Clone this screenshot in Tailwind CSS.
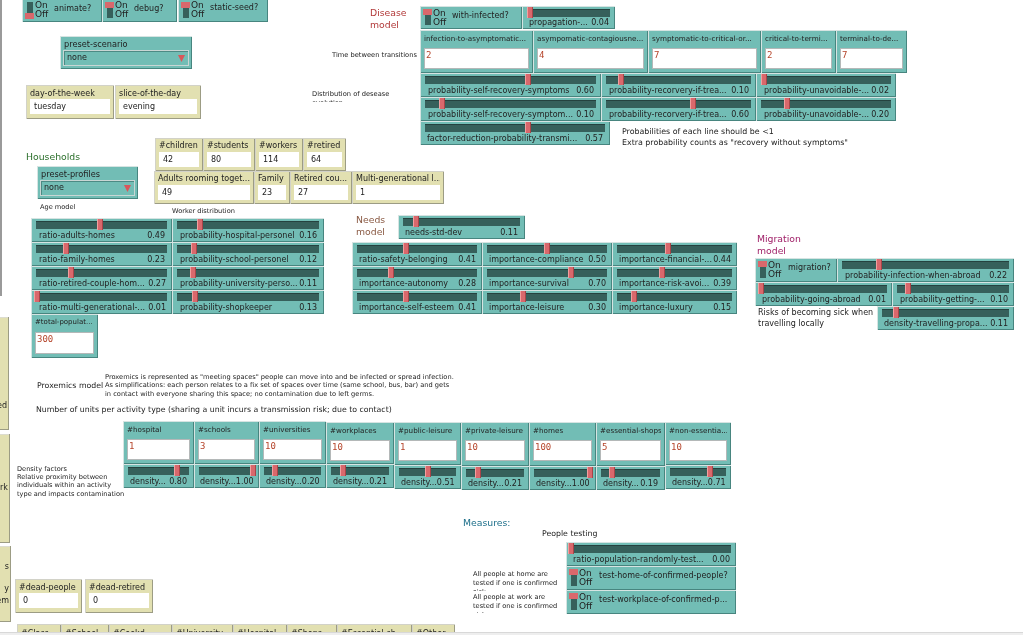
<!doctype html>
<html><head><meta charset="utf-8"><script src="https://cdn.jsdelivr.net/npm/@tailwindcss/browser@4"></script></head>
<body class="bg-white">
<div class="relative w-[1023px] h-[635px] overflow-hidden bg-white text-[#222] text-[8px] blur-[0.3px] font-['DejaVu_Sans',sans-serif]">

<!-- left edge + clipped panels -->
<div class="absolute left-0 top-0 w-[2px] h-[296px] bg-[#9a9a9a]"></div>
<div class="absolute left-0 top-[317px] w-[9px] h-[113px] bg-[#e2e0b1] shadow-[inset_-1px_-1px_0_#9c9c84,inset_0_1px_0_#dcdcd0] overflow-hidden"><span class="absolute right-[2px] top-[83px]">ed</span></div>
<div class="absolute left-0 top-[434px] w-[10px] h-[109px] bg-[#e2e0b1] shadow-[inset_-1px_-1px_0_#9c9c84,inset_0_1px_0_#dcdcd0] overflow-hidden"><span class="absolute right-[2px] top-[48px]">rk</span></div>
<div class="absolute left-0 top-[546px] w-[11px] h-[76px] bg-[#e2e0b1] shadow-[inset_-1px_-1px_0_#9c9c84,inset_0_1px_0_#dcdcd0] overflow-hidden"><span class="absolute right-[2px] top-[15px]">s</span><span class="absolute right-[2px] top-[37px]">y</span><span class="absolute right-[2px] top-[49px]">em</span></div>

<!-- top switches -->
<div class="absolute left-[22px] top-0 flex">
 <div class="relative w-[80px] h-[22px] bg-[#72bdb5] shadow-[inset_1px_0_0_#d6e4e2,inset_-1px_-1px_0_#47857f]"><i class="absolute left-[5px] top-[2px] w-[6px] h-[16px] bg-[#36605b]"></i><i class="absolute left-[3px] top-[13px] w-[9px] h-[6px] bg-[#d9686c]"></i><span class="absolute left-[13px] top-[1px] text-[9px] leading-[9px]">On<br>Off</span><span class="absolute left-[32px] top-[3px]">animate?</span></div>
 <div class="relative w-[75px] h-[22px] bg-[#72bdb5] shadow-[inset_1px_0_0_#d6e4e2,inset_-1px_-1px_0_#47857f]"><i class="absolute left-[5px] top-[2px] w-[6px] h-[16px] bg-[#36605b]"></i><i class="absolute left-[3px] top-[2px] w-[9px] h-[6px] bg-[#d9686c]"></i><span class="absolute left-[13px] top-[1px] text-[9px] leading-[9px]">On<br>Off</span><span class="absolute left-[32px] top-[3px]">debug?</span></div>
 <div class="relative ml-[1px] w-[90px] h-[22px] bg-[#72bdb5] shadow-[inset_1px_0_0_#d6e4e2,inset_-1px_-1px_0_#47857f]"><i class="absolute left-[5px] top-[2px] w-[6px] h-[16px] bg-[#36605b]"></i><i class="absolute left-[3px] top-[2px] w-[9px] h-[6px] bg-[#d9686c]"></i><span class="absolute left-[13px] top-[1px] text-[9px] leading-[9px]">On<br>Off</span><span class="absolute left-[32px] top-[2px]">static-seed?</span></div>
</div>

<!-- preset-scenario -->
<div class="absolute left-[60px] top-[36px] w-[132px] h-[33px] bg-[#72bdb5] shadow-[inset_1px_1px_0_#d6e4e2,inset_-1px_-1px_0_#47857f] px-[3px] pt-[3px]">
 <div class="px-[1px] leading-[10px] text-[8.2px]">preset-scenario</div>
 <div class="mt-[1px] h-[16px] border border-[#c8d6d4] shadow-[inset_1px_1px_0_#4c8a84] flex items-center justify-between pl-[3px] pr-[3px]"><span>none</span><svg width="7" height="7" viewBox="0 0 7 7"><path d="M0 0H7L3.5 7Z" fill="#d9565a"/></svg></div>
</div>

<!-- day / slice -->
<div class="absolute left-[26px] top-[85px] flex gap-[1px]">
 <div class="w-[88px] h-[34px] bg-[#e2e0b1] shadow-[inset_1px_1px_0_#d2d2c8,inset_-1px_-1px_0_#9c9c84] px-[4px] pt-[4px]"><div class="leading-[10px] whitespace-nowrap">day-of-the-week</div><div class="h-[15px] bg-white px-[4px] leading-[15px]">tuesday</div></div>
 <div class="w-[86px] h-[34px] bg-[#e2e0b1] shadow-[inset_1px_1px_0_#d2d2c8,inset_-1px_-1px_0_#9c9c84] px-[4px] pt-[4px]"><div class="leading-[10px] whitespace-nowrap">slice-of-the-day</div><div class="h-[15px] bg-white px-[4px] leading-[15px]">evening</div></div>
</div>

<!-- disease model -->
<div class="absolute left-[370px] top-[7px] text-[9.3px] leading-[12px] text-[#b23a3a]">Disease<br>model</div>
<div class="absolute left-[332px] top-[51px] text-[6.7px] leading-[9px] whitespace-nowrap">Time between transitions</div>
<div class="absolute left-[312px] top-[90px] h-[12px] overflow-hidden text-[6.7px] leading-[9px] w-[100px]">Distribution of desease<br>evolution</div>
<div class="absolute left-[420px] top-[6px] flex flex-col">
 <div class="flex mb-[1px]">
  <div class="relative w-[102px] h-[23px] bg-[#72bdb5] shadow-[inset_1px_1px_0_#d6e4e2,inset_-1px_-1px_0_#47857f]"><i class="absolute left-[5px] top-[3px] w-[6px] h-[16px] bg-[#36605b]"></i><i class="absolute left-[3px] top-[3px] w-[9px] h-[6px] bg-[#d9686c]"></i><span class="absolute left-[13px] top-[3px] text-[9px] leading-[9px]">On<br>Off</span><span class="absolute left-[32px] top-[4px]">with-infected?</span></div>
  <div class="w-[93px] h-[23px] bg-[#72bdb5] shadow-[inset_1px_1px_0_#d6e4e2,inset_-1px_-1px_0_#47857f] px-[5px] pt-[3px]"><div class="relative h-[8px] bg-[#36605b] shadow-[inset_0_1px_0_#25423f]"><i class="absolute left-[calc(4%-3px)] top-[-2px] w-[6px] h-[11px] bg-[#d9686c] shadow-[inset_1px_0_0_#f0a0a0,inset_-1px_0_0_#a84448]"></i></div><div class="flex justify-between pl-[2px] pr-[1px] leading-[12px] whitespace-nowrap"><span>propagation-...</span><span>0.04</span></div></div>
 </div>
 <div class="flex">
  <div class="w-[113px] h-[43px] bg-[#72bdb5] shadow-[inset_1px_1px_0_#d6e4e2,inset_-1px_-1px_0_#47857f] px-[4px] pt-[3px]"><div class="leading-[11px] h-[15px] whitespace-nowrap overflow-hidden text-[7.2px]">infection-to-asymptomatic...</div><div class="h-[21px] bg-white border-[1.5px] border-[#b4b8b8] px-[1px] text-[#b5442a] font-['DejaVu_Sans_Mono',monospace] text-[9px] leading-[12px]">2</div></div>
  <div class="w-[115px] h-[43px] bg-[#72bdb5] shadow-[inset_1px_1px_0_#d6e4e2,inset_-1px_-1px_0_#47857f] px-[4px] pt-[3px]"><div class="leading-[11px] h-[15px] whitespace-nowrap overflow-hidden text-[7.2px]">asympomatic-contagiousne...</div><div class="h-[21px] bg-white border-[1.5px] border-[#b4b8b8] px-[1px] text-[#b5442a] font-['DejaVu_Sans_Mono',monospace] text-[9px] leading-[12px]">4</div></div>
  <div class="w-[113px] h-[43px] bg-[#72bdb5] shadow-[inset_1px_1px_0_#d6e4e2,inset_-1px_-1px_0_#47857f] px-[4px] pt-[3px]"><div class="leading-[11px] h-[15px] whitespace-nowrap overflow-hidden text-[7.2px]">symptomatic-to-critical-or...</div><div class="h-[21px] bg-white border-[1.5px] border-[#b4b8b8] px-[1px] text-[#b5442a] font-['DejaVu_Sans_Mono',monospace] text-[9px] leading-[12px]">7</div></div>
  <div class="w-[75px] h-[43px] bg-[#72bdb5] shadow-[inset_1px_1px_0_#d6e4e2,inset_-1px_-1px_0_#47857f] px-[4px] pt-[3px]"><div class="leading-[11px] h-[15px] whitespace-nowrap overflow-hidden text-[7.2px]">critical-to-termi...</div><div class="h-[21px] bg-white border-[1.5px] border-[#b4b8b8] px-[1px] text-[#b5442a] font-['DejaVu_Sans_Mono',monospace] text-[9px] leading-[12px]">2</div></div>
  <div class="w-[71px] h-[43px] bg-[#72bdb5] shadow-[inset_1px_1px_0_#d6e4e2,inset_-1px_-1px_0_#47857f] px-[4px] pt-[3px]"><div class="leading-[11px] h-[15px] whitespace-nowrap overflow-hidden text-[7.2px]">terminal-to-de...</div><div class="h-[21px] bg-white border-[1.5px] border-[#b4b8b8] px-[1px] text-[#b5442a] font-['DejaVu_Sans_Mono',monospace] text-[9px] leading-[12px]">7</div></div>
 </div>
 <div class="flex">
  <div class="w-[181px] h-[24px] bg-[#72bdb5] shadow-[inset_1px_1px_0_#d6e4e2,inset_-1px_-1px_0_#47857f] px-[5px] pt-[3px]"><div class="relative h-[8px] bg-[#36605b] shadow-[inset_0_1px_0_#25423f]"><i class="absolute left-[calc(60%-3px)] top-[-2px] w-[6px] h-[11px] bg-[#d9686c] shadow-[inset_1px_0_0_#f0a0a0,inset_-1px_0_0_#a84448]"></i></div><div class="flex justify-between pl-[3px] pr-[2px] pt-[1px] leading-[12px] whitespace-nowrap"><span>probability-self-recovery-symptoms</span><span>0.60</span></div></div>
  <div class="w-[155px] h-[24px] bg-[#72bdb5] shadow-[inset_1px_1px_0_#d6e4e2,inset_-1px_-1px_0_#47857f] px-[5px] pt-[3px]"><div class="relative h-[8px] bg-[#36605b] shadow-[inset_0_1px_0_#25423f]"><i class="absolute left-[calc(10%-3px)] top-[-2px] w-[6px] h-[11px] bg-[#d9686c] shadow-[inset_1px_0_0_#f0a0a0,inset_-1px_0_0_#a84448]"></i></div><div class="flex justify-between pl-[3px] pr-[2px] pt-[1px] leading-[12px] whitespace-nowrap"><span>probability-recorvery-if-trea...</span><span>0.10</span></div></div>
  <div class="w-[140px] h-[24px] bg-[#72bdb5] shadow-[inset_1px_1px_0_#d6e4e2,inset_-1px_-1px_0_#47857f] px-[5px] pt-[3px]"><div class="relative h-[8px] bg-[#36605b] shadow-[inset_0_1px_0_#25423f]"><i class="absolute left-[calc(2%-3px)] top-[-2px] w-[6px] h-[11px] bg-[#d9686c] shadow-[inset_1px_0_0_#f0a0a0,inset_-1px_0_0_#a84448]"></i></div><div class="flex justify-between pl-[3px] pr-[2px] pt-[1px] leading-[12px] whitespace-nowrap"><span>probability-unavoidable-...</span><span>0.02</span></div></div>
 </div>
 <div class="flex">
  <div class="w-[181px] h-[24px] bg-[#72bdb5] shadow-[inset_1px_1px_0_#d6e4e2,inset_-1px_-1px_0_#47857f] px-[5px] pt-[3px]"><div class="relative h-[8px] bg-[#36605b] shadow-[inset_0_1px_0_#25423f]"><i class="absolute left-[calc(10%-3px)] top-[-2px] w-[6px] h-[11px] bg-[#d9686c] shadow-[inset_1px_0_0_#f0a0a0,inset_-1px_0_0_#a84448]"></i></div><div class="flex justify-between pl-[3px] pr-[2px] pt-[1px] leading-[12px] whitespace-nowrap"><span>probability-self-recovery-symptom...</span><span>0.10</span></div></div>
  <div class="w-[155px] h-[24px] bg-[#72bdb5] shadow-[inset_1px_1px_0_#d6e4e2,inset_-1px_-1px_0_#47857f] px-[5px] pt-[3px]"><div class="relative h-[8px] bg-[#36605b] shadow-[inset_0_1px_0_#25423f]"><i class="absolute left-[calc(60%-3px)] top-[-2px] w-[6px] h-[11px] bg-[#d9686c] shadow-[inset_1px_0_0_#f0a0a0,inset_-1px_0_0_#a84448]"></i></div><div class="flex justify-between pl-[3px] pr-[2px] pt-[1px] leading-[12px] whitespace-nowrap"><span>probability-recorvery-if-trea...</span><span>0.60</span></div></div>
  <div class="w-[140px] h-[24px] bg-[#72bdb5] shadow-[inset_1px_1px_0_#d6e4e2,inset_-1px_-1px_0_#47857f] px-[5px] pt-[3px]"><div class="relative h-[8px] bg-[#36605b] shadow-[inset_0_1px_0_#25423f]"><i class="absolute left-[calc(20%-3px)] top-[-2px] w-[6px] h-[11px] bg-[#d9686c] shadow-[inset_1px_0_0_#f0a0a0,inset_-1px_0_0_#a84448]"></i></div><div class="flex justify-between pl-[3px] pr-[2px] pt-[1px] leading-[12px] whitespace-nowrap"><span>probability-unavoidable-...</span><span>0.20</span></div></div>
 </div>
 <div class="flex items-start">
  <div class="w-[190px] h-[24px] bg-[#72bdb5] shadow-[inset_1px_1px_0_#d6e4e2,inset_-1px_-1px_0_#47857f] px-[5px] pt-[3px]"><div class="relative h-[8px] bg-[#36605b] shadow-[inset_0_1px_0_#25423f]"><i class="absolute left-[calc(57%-3px)] top-[-2px] w-[6px] h-[11px] bg-[#d9686c] shadow-[inset_1px_0_0_#f0a0a0,inset_-1px_0_0_#a84448]"></i></div><div class="flex justify-between pl-[2px] pr-[2px] pt-[1px] leading-[12px] whitespace-nowrap"><span>factor-reduction-probability-transmi...</span><span>0.57</span></div></div>
  <div class="ml-[12px] mt-[6px] text-[7.9px] leading-[10.5px] whitespace-nowrap">Probabilities of each line should be &lt;1<br>Extra probability counts as "recovery without symptoms"</div>
 </div>
</div>

<!-- households -->
<div class="absolute left-[26px] top-[151px] text-[9.3px] leading-[12px] text-[#2a6e2a]">Households</div>
<div class="absolute left-[37px] top-[166px] w-[101px] h-[33px] bg-[#72bdb5] shadow-[inset_1px_1px_0_#d6e4e2,inset_-1px_-1px_0_#47857f] px-[3px] pt-[3px]">
 <div class="px-[1px] leading-[10px] text-[8.2px]">preset-profiles</div>
 <div class="mt-[1px] h-[16px] border border-[#c8d6d4] shadow-[inset_1px_1px_0_#4c8a84] flex items-center justify-between pl-[3px] pr-[3px]"><span>none</span><svg width="7" height="7" viewBox="0 0 7 7"><path d="M0 0H7L3.5 7Z" fill="#d9565a"/></svg></div>
</div>
<div class="absolute left-[40px] top-[203px] text-[6.6px] leading-[9px]">Age model</div>
<div class="absolute left-[172px] top-[207px] text-[6.6px] leading-[9px]">Worker distribution</div>

<div class="absolute left-[154px] top-[138px] flex flex-col">
 <div class="flex ml-[1px]">
  <div class="w-[48px] h-[33px] bg-[#e2e0b1] shadow-[inset_1px_1px_0_#d2d2c8,inset_-1px_-1px_0_#9c9c84] px-[4px] pt-[3px]"><div class="leading-[10px] whitespace-nowrap overflow-hidden">#children</div><div class="mt-[1px] h-[15px] bg-white px-[4px] leading-[15px]">42</div></div>
  <div class="w-[52px] h-[33px] bg-[#e2e0b1] shadow-[inset_1px_1px_0_#d2d2c8,inset_-1px_-1px_0_#9c9c84] px-[4px] pt-[3px]"><div class="leading-[10px] whitespace-nowrap overflow-hidden">#students</div><div class="mt-[1px] h-[15px] bg-white px-[4px] leading-[15px]">80</div></div>
  <div class="w-[48px] h-[33px] bg-[#e2e0b1] shadow-[inset_1px_1px_0_#d2d2c8,inset_-1px_-1px_0_#9c9c84] px-[4px] pt-[3px]"><div class="leading-[10px] whitespace-nowrap overflow-hidden">#workers</div><div class="mt-[1px] h-[15px] bg-white px-[4px] leading-[15px]">114</div></div>
  <div class="w-[43px] h-[33px] bg-[#e2e0b1] shadow-[inset_1px_1px_0_#d2d2c8,inset_-1px_-1px_0_#9c9c84] px-[4px] pt-[3px]"><div class="leading-[10px] whitespace-nowrap overflow-hidden">#retired</div><div class="mt-[1px] h-[15px] bg-white px-[4px] leading-[15px]">64</div></div>
 </div>
 <div class="flex">
  <div class="w-[100px] h-[33px] bg-[#e2e0b1] shadow-[inset_1px_1px_0_#d2d2c8,inset_-1px_-1px_0_#9c9c84] px-[4px] pt-[3px]"><div class="leading-[10px] whitespace-nowrap overflow-hidden">Adults rooming toget...</div><div class="mt-[1px] h-[15px] bg-white px-[4px] leading-[15px]">49</div></div>
  <div class="w-[36px] h-[33px] bg-[#e2e0b1] shadow-[inset_1px_1px_0_#d2d2c8,inset_-1px_-1px_0_#9c9c84] px-[4px] pt-[3px]"><div class="leading-[10px] whitespace-nowrap overflow-hidden">Family</div><div class="mt-[1px] h-[15px] bg-white px-[4px] leading-[15px]">23</div></div>
  <div class="w-[62px] h-[33px] bg-[#e2e0b1] shadow-[inset_1px_1px_0_#d2d2c8,inset_-1px_-1px_0_#9c9c84] px-[4px] pt-[3px]"><div class="leading-[10px] whitespace-nowrap overflow-hidden">Retired cou...</div><div class="mt-[1px] h-[15px] bg-white px-[4px] leading-[15px]">27</div></div>
  <div class="w-[92px] h-[33px] bg-[#e2e0b1] shadow-[inset_1px_1px_0_#d2d2c8,inset_-1px_-1px_0_#9c9c84] px-[4px] pt-[3px]"><div class="leading-[10px] whitespace-nowrap overflow-hidden">Multi-generational l...</div><div class="mt-[1px] h-[15px] bg-white px-[4px] leading-[15px]">1</div></div>
 </div>
</div>

<div class="absolute left-[31px] top-[218px] grid grid-cols-[141px_152px]">
 <div class="h-[24px] bg-[#72bdb5] shadow-[inset_1px_1px_0_#d6e4e2,inset_-1px_-1px_0_#47857f] px-[5px] pt-[3px]"><div class="relative h-[8px] bg-[#36605b] shadow-[inset_0_1px_0_#25423f]"><i class="absolute left-[calc(49%-3px)] top-[-2px] w-[6px] h-[11px] bg-[#d9686c] shadow-[inset_1px_0_0_#f0a0a0,inset_-1px_0_0_#a84448]"></i></div><div class="flex justify-between pl-[3px] pr-[2px] pt-[1px] leading-[12px] whitespace-nowrap"><span>ratio-adults-homes</span><span>0.49</span></div></div>
 <div class="h-[24px] bg-[#72bdb5] shadow-[inset_1px_1px_0_#d6e4e2,inset_-1px_-1px_0_#47857f] px-[5px] pt-[3px]"><div class="relative h-[8px] bg-[#36605b] shadow-[inset_0_1px_0_#25423f]"><i class="absolute left-[calc(16%-3px)] top-[-2px] w-[6px] h-[11px] bg-[#d9686c] shadow-[inset_1px_0_0_#f0a0a0,inset_-1px_0_0_#a84448]"></i></div><div class="flex justify-between pl-[3px] pr-[2px] pt-[1px] leading-[12px] whitespace-nowrap"><span>probability-hospital-personel</span><span>0.16</span></div></div>
 <div class="h-[24px] bg-[#72bdb5] shadow-[inset_1px_1px_0_#d6e4e2,inset_-1px_-1px_0_#47857f] px-[5px] pt-[3px]"><div class="relative h-[8px] bg-[#36605b] shadow-[inset_0_1px_0_#25423f]"><i class="absolute left-[calc(23%-3px)] top-[-2px] w-[6px] h-[11px] bg-[#d9686c] shadow-[inset_1px_0_0_#f0a0a0,inset_-1px_0_0_#a84448]"></i></div><div class="flex justify-between pl-[3px] pr-[2px] pt-[1px] leading-[12px] whitespace-nowrap"><span>ratio-family-homes</span><span>0.23</span></div></div>
 <div class="h-[24px] bg-[#72bdb5] shadow-[inset_1px_1px_0_#d6e4e2,inset_-1px_-1px_0_#47857f] px-[5px] pt-[3px]"><div class="relative h-[8px] bg-[#36605b] shadow-[inset_0_1px_0_#25423f]"><i class="absolute left-[calc(12%-3px)] top-[-2px] w-[6px] h-[11px] bg-[#d9686c] shadow-[inset_1px_0_0_#f0a0a0,inset_-1px_0_0_#a84448]"></i></div><div class="flex justify-between pl-[3px] pr-[2px] pt-[1px] leading-[12px] whitespace-nowrap"><span>probability-school-personel</span><span>0.12</span></div></div>
 <div class="h-[24px] bg-[#72bdb5] shadow-[inset_1px_1px_0_#d6e4e2,inset_-1px_-1px_0_#47857f] px-[5px] pt-[3px]"><div class="relative h-[8px] bg-[#36605b] shadow-[inset_0_1px_0_#25423f]"><i class="absolute left-[calc(27%-3px)] top-[-2px] w-[6px] h-[11px] bg-[#d9686c] shadow-[inset_1px_0_0_#f0a0a0,inset_-1px_0_0_#a84448]"></i></div><div class="flex justify-between pl-[3px] pr-[1px] pt-[1px] leading-[12px] whitespace-nowrap"><span>ratio-retired-couple-hom...</span><span>0.27</span></div></div>
 <div class="h-[24px] bg-[#72bdb5] shadow-[inset_1px_1px_0_#d6e4e2,inset_-1px_-1px_0_#47857f] px-[5px] pt-[3px]"><div class="relative h-[8px] bg-[#36605b] shadow-[inset_0_1px_0_#25423f]"><i class="absolute left-[calc(11%-3px)] top-[-2px] w-[6px] h-[11px] bg-[#d9686c] shadow-[inset_1px_0_0_#f0a0a0,inset_-1px_0_0_#a84448]"></i></div><div class="flex justify-between pl-[3px] pr-[2px] pt-[1px] leading-[12px] whitespace-nowrap"><span>probability-university-perso...</span><span>0.11</span></div></div>
 <div class="h-[24px] bg-[#72bdb5] shadow-[inset_1px_1px_0_#d6e4e2,inset_-1px_-1px_0_#47857f] px-[5px] pt-[3px]"><div class="relative h-[8px] bg-[#36605b] shadow-[inset_0_1px_0_#25423f]"><i class="absolute left-[calc(1%-3px)] top-[-2px] w-[6px] h-[11px] bg-[#d9686c] shadow-[inset_1px_0_0_#f0a0a0,inset_-1px_0_0_#a84448]"></i></div><div class="flex justify-between pl-[3px] pr-[1px] pt-[1px] leading-[12px] whitespace-nowrap"><span>ratio-multi-generational-...</span><span>0.01</span></div></div>
 <div class="h-[24px] bg-[#72bdb5] shadow-[inset_1px_1px_0_#d6e4e2,inset_-1px_-1px_0_#47857f] px-[5px] pt-[3px]"><div class="relative h-[8px] bg-[#36605b] shadow-[inset_0_1px_0_#25423f]"><i class="absolute left-[calc(13%-3px)] top-[-2px] w-[6px] h-[11px] bg-[#d9686c] shadow-[inset_1px_0_0_#f0a0a0,inset_-1px_0_0_#a84448]"></i></div><div class="flex justify-between pl-[3px] pr-[2px] pt-[1px] leading-[12px] whitespace-nowrap"><span>probability-shopkeeper</span><span>0.13</span></div></div>
 <div class="w-[67px] h-[44px] bg-[#72bdb5] shadow-[inset_1px_1px_0_#d6e4e2,inset_-1px_-1px_0_#47857f] px-[4px] pt-[3px]"><div class="leading-[11px] h-[15px] whitespace-nowrap overflow-hidden text-[7px]">#total-populat...</div><div class="h-[22px] bg-white border-[1.5px] border-[#b4b8b8] px-[1px] text-[#b5442a] font-['DejaVu_Sans_Mono',monospace] text-[9px] leading-[12px]">300</div></div>
</div>

<!-- needs -->
<div class="absolute left-[356px] top-[214px] text-[9.3px] leading-[12px] text-[#8a5a44]">Needs<br>model</div>
<div class="absolute left-[398px] top-[215px] w-[127px] h-[24px] bg-[#72bdb5] shadow-[inset_1px_1px_0_#d6e4e2,inset_-1px_-1px_0_#47857f] px-[5px] pt-[3px]"><div class="relative h-[8px] bg-[#36605b] shadow-[inset_0_1px_0_#25423f]"><i class="absolute left-[calc(11%-3px)] top-[-2px] w-[6px] h-[11px] bg-[#d9686c] shadow-[inset_1px_0_0_#f0a0a0,inset_-1px_0_0_#a84448]"></i></div><div class="flex justify-between pl-[2px] pr-[2px] pt-[1px] leading-[12px] whitespace-nowrap"><span>needs-std-dev</span><span>0.11</span></div></div>
<div class="absolute left-[352px] top-[242px] grid grid-cols-[130px_130px_125px]">
 <div class="h-[24px] bg-[#72bdb5] shadow-[inset_1px_1px_0_#d6e4e2,inset_-1px_-1px_0_#47857f] px-[5px] pt-[3px]"><div class="relative h-[8px] bg-[#36605b] shadow-[inset_0_1px_0_#25423f]"><i class="absolute left-[calc(41%-3px)] top-[-2px] w-[6px] h-[11px] bg-[#d9686c] shadow-[inset_1px_0_0_#f0a0a0,inset_-1px_0_0_#a84448]"></i></div><div class="flex justify-between pl-[2px] pr-[1px] pt-[1px] leading-[12px] whitespace-nowrap"><span>ratio-safety-belonging</span><span>0.41</span></div></div>
 <div class="h-[24px] bg-[#72bdb5] shadow-[inset_1px_1px_0_#d6e4e2,inset_-1px_-1px_0_#47857f] px-[5px] pt-[3px]"><div class="relative h-[8px] bg-[#36605b] shadow-[inset_0_1px_0_#25423f]"><i class="absolute left-[calc(50%-3px)] top-[-2px] w-[6px] h-[11px] bg-[#d9686c] shadow-[inset_1px_0_0_#f0a0a0,inset_-1px_0_0_#a84448]"></i></div><div class="flex justify-between pl-[2px] pr-[1px] pt-[1px] leading-[12px] whitespace-nowrap"><span>importance-compliance</span><span>0.50</span></div></div>
 <div class="h-[24px] bg-[#72bdb5] shadow-[inset_1px_1px_0_#d6e4e2,inset_-1px_-1px_0_#47857f] px-[5px] pt-[3px]"><div class="relative h-[8px] bg-[#36605b] shadow-[inset_0_1px_0_#25423f]"><i class="absolute left-[calc(44%-3px)] top-[-2px] w-[6px] h-[11px] bg-[#d9686c] shadow-[inset_1px_0_0_#f0a0a0,inset_-1px_0_0_#a84448]"></i></div><div class="flex justify-between pl-[2px] pr-[1px] pt-[1px] leading-[12px] whitespace-nowrap"><span>importance-financial-...</span><span>0.44</span></div></div>
 <div class="h-[24px] bg-[#72bdb5] shadow-[inset_1px_1px_0_#d6e4e2,inset_-1px_-1px_0_#47857f] px-[5px] pt-[3px]"><div class="relative h-[8px] bg-[#36605b] shadow-[inset_0_1px_0_#25423f]"><i class="absolute left-[calc(28%-3px)] top-[-2px] w-[6px] h-[11px] bg-[#d9686c] shadow-[inset_1px_0_0_#f0a0a0,inset_-1px_0_0_#a84448]"></i></div><div class="flex justify-between pl-[2px] pr-[1px] pt-[1px] leading-[12px] whitespace-nowrap"><span>importance-autonomy</span><span>0.28</span></div></div>
 <div class="h-[24px] bg-[#72bdb5] shadow-[inset_1px_1px_0_#d6e4e2,inset_-1px_-1px_0_#47857f] px-[5px] pt-[3px]"><div class="relative h-[8px] bg-[#36605b] shadow-[inset_0_1px_0_#25423f]"><i class="absolute left-[calc(70%-3px)] top-[-2px] w-[6px] h-[11px] bg-[#d9686c] shadow-[inset_1px_0_0_#f0a0a0,inset_-1px_0_0_#a84448]"></i></div><div class="flex justify-between pl-[2px] pr-[1px] pt-[1px] leading-[12px] whitespace-nowrap"><span>importance-survival</span><span>0.70</span></div></div>
 <div class="h-[24px] bg-[#72bdb5] shadow-[inset_1px_1px_0_#d6e4e2,inset_-1px_-1px_0_#47857f] px-[5px] pt-[3px]"><div class="relative h-[8px] bg-[#36605b] shadow-[inset_0_1px_0_#25423f]"><i class="absolute left-[calc(39%-3px)] top-[-2px] w-[6px] h-[11px] bg-[#d9686c] shadow-[inset_1px_0_0_#f0a0a0,inset_-1px_0_0_#a84448]"></i></div><div class="flex justify-between pl-[2px] pr-[1px] pt-[1px] leading-[12px] whitespace-nowrap"><span>importance-risk-avoi...</span><span>0.39</span></div></div>
 <div class="h-[24px] bg-[#72bdb5] shadow-[inset_1px_1px_0_#d6e4e2,inset_-1px_-1px_0_#47857f] px-[5px] pt-[3px]"><div class="relative h-[8px] bg-[#36605b] shadow-[inset_0_1px_0_#25423f]"><i class="absolute left-[calc(41%-3px)] top-[-2px] w-[6px] h-[11px] bg-[#d9686c] shadow-[inset_1px_0_0_#f0a0a0,inset_-1px_0_0_#a84448]"></i></div><div class="flex justify-between pl-[2px] pr-[1px] pt-[1px] leading-[12px] whitespace-nowrap"><span>importance-self-esteem</span><span>0.41</span></div></div>
 <div class="h-[24px] bg-[#72bdb5] shadow-[inset_1px_1px_0_#d6e4e2,inset_-1px_-1px_0_#47857f] px-[5px] pt-[3px]"><div class="relative h-[8px] bg-[#36605b] shadow-[inset_0_1px_0_#25423f]"><i class="absolute left-[calc(30%-3px)] top-[-2px] w-[6px] h-[11px] bg-[#d9686c] shadow-[inset_1px_0_0_#f0a0a0,inset_-1px_0_0_#a84448]"></i></div><div class="flex justify-between pl-[2px] pr-[1px] pt-[1px] leading-[12px] whitespace-nowrap"><span>importance-leisure</span><span>0.30</span></div></div>
 <div class="h-[24px] bg-[#72bdb5] shadow-[inset_1px_1px_0_#d6e4e2,inset_-1px_-1px_0_#47857f] px-[5px] pt-[3px]"><div class="relative h-[8px] bg-[#36605b] shadow-[inset_0_1px_0_#25423f]"><i class="absolute left-[calc(15%-3px)] top-[-2px] w-[6px] h-[11px] bg-[#d9686c] shadow-[inset_1px_0_0_#f0a0a0,inset_-1px_0_0_#a84448]"></i></div><div class="flex justify-between pl-[2px] pr-[1px] pt-[1px] leading-[12px] whitespace-nowrap"><span>importance-luxury</span><span>0.15</span></div></div>
</div>

<!-- migration -->
<div class="absolute left-[757px] top-[233px] text-[9.3px] leading-[12px] text-[#a02068]">Migration<br>model</div>
<div class="absolute left-[755px] top-[258px] flex flex-col">
 <div class="flex">
  <div class="relative w-[82px] h-[24px] bg-[#72bdb5] shadow-[inset_1px_1px_0_#d6e4e2,inset_-1px_-1px_0_#47857f]"><i class="absolute left-[5px] top-[3px] w-[6px] h-[17px] bg-[#36605b]"></i><i class="absolute left-[3px] top-[3px] w-[9px] h-[6px] bg-[#d9686c]"></i><span class="absolute left-[13px] top-[3px] text-[9px] leading-[9px]">On<br>Off</span><span class="absolute left-[33px] top-[4px]">migration?</span></div>
  <div class="w-[177px] h-[24px] bg-[#72bdb5] shadow-[inset_1px_1px_0_#d6e4e2,inset_-1px_-1px_0_#47857f] px-[5px] pt-[3px]"><div class="relative h-[8px] bg-[#36605b] shadow-[inset_0_1px_0_#25423f]"><i class="absolute left-[calc(22%-3px)] top-[-2px] w-[6px] h-[11px] bg-[#d9686c] shadow-[inset_1px_0_0_#f0a0a0,inset_-1px_0_0_#a84448]"></i></div><div class="flex justify-between pl-[3px] pr-[2px] pt-[1px] leading-[12px] whitespace-nowrap"><span>probability-infection-when-abroad</span><span>0.22</span></div></div>
 </div>
 <div class="flex">
  <div class="w-[137px] h-[24px] bg-[#72bdb5] shadow-[inset_1px_1px_0_#d6e4e2,inset_-1px_-1px_0_#47857f] px-[5px] pt-[3px]"><div class="relative h-[8px] bg-[#36605b] shadow-[inset_0_1px_0_#25423f]"><i class="absolute left-[calc(1%-3px)] top-[-2px] w-[6px] h-[11px] bg-[#d9686c] shadow-[inset_1px_0_0_#f0a0a0,inset_-1px_0_0_#a84448]"></i></div><div class="flex justify-between pl-[2px] pr-[1px] pt-[1px] leading-[12px] whitespace-nowrap"><span>probability-going-abroad</span><span>0.01</span></div></div>
  <div class="w-[122px] h-[24px] bg-[#72bdb5] shadow-[inset_1px_1px_0_#d6e4e2,inset_-1px_-1px_0_#47857f] px-[5px] pt-[3px]"><div class="relative h-[8px] bg-[#36605b] shadow-[inset_0_1px_0_#25423f]"><i class="absolute left-[calc(10%-3px)] top-[-2px] w-[6px] h-[11px] bg-[#d9686c] shadow-[inset_1px_0_0_#f0a0a0,inset_-1px_0_0_#a84448]"></i></div><div class="flex justify-between pl-[3px] pr-[1px] pt-[1px] leading-[12px] whitespace-nowrap"><span>probability-getting-...</span><span>0.10</span></div></div>
 </div>
 <div class="flex">
  <div class="w-[122px] pl-[3px] pt-[1px] leading-[11px] whitespace-nowrap">Risks of becoming sick when<br>travelling locally</div>
  <div class="w-[137px] h-[24px] bg-[#72bdb5] shadow-[inset_1px_1px_0_#d6e4e2,inset_-1px_-1px_0_#47857f] px-[5px] pt-[3px]"><div class="relative h-[8px] bg-[#36605b] shadow-[inset_0_1px_0_#25423f]"><i class="absolute left-[calc(11%-3px)] top-[-2px] w-[6px] h-[11px] bg-[#d9686c] shadow-[inset_1px_0_0_#f0a0a0,inset_-1px_0_0_#a84448]"></i></div><div class="flex justify-between pl-[2px] pr-[1px] pt-[1px] leading-[12px] whitespace-nowrap"><span>density-travelling-propa...</span><span>0.11</span></div></div>
 </div>
</div>

<!-- proxemics -->
<div class="absolute left-[37px] top-[380px] text-[7.8px] leading-[12px] whitespace-nowrap">Proxemics model</div>
<div class="absolute left-[105px] top-[373px] text-[6.65px] leading-[8.3px] whitespace-nowrap">Proxemics is represented as "meeting spaces" people can move into and be infected or spread infection.<br>As simplifications: each person relates to a fix set of spaces over time (same school, bus, bar) and gets<br>in contact with everyone sharing this space; no contamination due to left germs.</div>
<div class="absolute left-[36px] top-[404px] text-[7.8px] leading-[12px] whitespace-nowrap">Number of units per activity type (sharing a unit incurs a transmission risk; due to contact)</div>
<div class="absolute left-[17px] top-[465px] text-[6.6px] leading-[8.2px] whitespace-nowrap">Density factors<br>Relative proximity between<br>individuals within an activity<br>type and impacts contamination</div>

<div class="absolute left-[123px] top-[421px] flex items-start">
 <div class="w-[71px]"><div class="h-[43px] bg-[#72bdb5] shadow-[inset_1px_1px_0_#d6e4e2,inset_-1px_-1px_0_#47857f] px-[4px] pt-[3px]"><div class="leading-[11px] h-[15px] whitespace-nowrap overflow-hidden text-[7.2px]">#hospital</div><div class="h-[21px] bg-white border-[1.5px] border-[#b4b8b8] px-[1px] text-[#b5442a] font-['DejaVu_Sans_Mono',monospace] text-[9px] leading-[12px]">1</div></div><div class="h-[24px] bg-[#72bdb5] shadow-[inset_1px_1px_0_#d6e4e2,inset_-1px_-1px_0_#47857f] px-[5px] pt-[3px]"><div class="relative h-[8px] bg-[#36605b] shadow-[inset_0_1px_0_#25423f]"><i class="absolute left-[calc(80%-3px)] top-[-2px] w-[6px] h-[11px] bg-[#d9686c] shadow-[inset_1px_0_0_#f0a0a0,inset_-1px_0_0_#a84448]"></i></div><div class="flex justify-between px-[2px] pt-[1px] leading-[12px] whitespace-nowrap"><span>density...</span><span>0.80</span></div></div></div>
 <div class="w-[65px]"><div class="h-[43px] bg-[#72bdb5] shadow-[inset_1px_1px_0_#d6e4e2,inset_-1px_-1px_0_#47857f] px-[4px] pt-[3px]"><div class="leading-[11px] h-[15px] whitespace-nowrap overflow-hidden text-[7.2px]">#schools</div><div class="h-[21px] bg-white border-[1.5px] border-[#b4b8b8] px-[1px] text-[#b5442a] font-['DejaVu_Sans_Mono',monospace] text-[9px] leading-[12px]">3</div></div><div class="h-[24px] bg-[#72bdb5] shadow-[inset_1px_1px_0_#d6e4e2,inset_-1px_-1px_0_#47857f] px-[5px] pt-[3px]"><div class="relative h-[8px] bg-[#36605b] shadow-[inset_0_1px_0_#25423f]"><i class="absolute left-[calc(100%-4px)] top-[-2px] w-[6px] h-[11px] bg-[#d9686c] shadow-[inset_1px_0_0_#f0a0a0,inset_-1px_0_0_#a84448]"></i></div><div class="flex justify-between px-[1px] pt-[1px] leading-[12px] whitespace-nowrap"><span>density...</span><span>1.00</span></div></div></div>
 <div class="w-[67px]"><div class="h-[43px] bg-[#72bdb5] shadow-[inset_1px_1px_0_#d6e4e2,inset_-1px_-1px_0_#47857f] px-[4px] pt-[3px]"><div class="leading-[11px] h-[15px] whitespace-nowrap overflow-hidden text-[7.2px]">#universities</div><div class="h-[21px] bg-white border-[1.5px] border-[#b4b8b8] px-[1px] text-[#b5442a] font-['DejaVu_Sans_Mono',monospace] text-[9px] leading-[12px]">10</div></div><div class="h-[24px] bg-[#72bdb5] shadow-[inset_1px_1px_0_#d6e4e2,inset_-1px_-1px_0_#47857f] px-[5px] pt-[3px]"><div class="relative h-[8px] bg-[#36605b] shadow-[inset_0_1px_0_#25423f]"><i class="absolute left-[calc(20%-3px)] top-[-2px] w-[6px] h-[11px] bg-[#d9686c] shadow-[inset_1px_0_0_#f0a0a0,inset_-1px_0_0_#a84448]"></i></div><div class="flex justify-between px-[2px] pt-[1px] leading-[12px] whitespace-nowrap"><span>density...</span><span>0.20</span></div></div></div>
 <div class="w-[68px] mt-[1px]"><div class="h-[42px] bg-[#72bdb5] shadow-[inset_1px_1px_0_#d6e4e2,inset_-1px_-1px_0_#47857f] px-[4px] pt-[3px]"><div class="leading-[11px] h-[15px] whitespace-nowrap overflow-hidden text-[7.2px]">#workplaces</div><div class="h-[21px] bg-white border-[1.5px] border-[#b4b8b8] px-[1px] text-[#b5442a] font-['DejaVu_Sans_Mono',monospace] text-[9px] leading-[12px]">10</div></div><div class="h-[24px] bg-[#72bdb5] shadow-[inset_1px_1px_0_#d6e4e2,inset_-1px_-1px_0_#47857f] px-[5px] pt-[3px]"><div class="relative h-[8px] bg-[#36605b] shadow-[inset_0_1px_0_#25423f]"><i class="absolute left-[calc(21%-3px)] top-[-2px] w-[6px] h-[11px] bg-[#d9686c] shadow-[inset_1px_0_0_#f0a0a0,inset_-1px_0_0_#a84448]"></i></div><div class="flex justify-between px-[2px] pt-[1px] leading-[12px] whitespace-nowrap"><span>density...</span><span>0.21</span></div></div></div>
 <div class="w-[67px] mt-[1px]"><div class="h-[43px] bg-[#72bdb5] shadow-[inset_1px_1px_0_#d6e4e2,inset_-1px_-1px_0_#47857f] px-[4px] pt-[3px]"><div class="leading-[11px] h-[15px] whitespace-nowrap overflow-hidden text-[7.2px]">#public-leisure</div><div class="h-[21px] bg-white border-[1.5px] border-[#b4b8b8] px-[1px] text-[#b5442a] font-['DejaVu_Sans_Mono',monospace] text-[9px] leading-[12px]">1</div></div><div class="h-[24px] bg-[#72bdb5] shadow-[inset_1px_1px_0_#d6e4e2,inset_-1px_-1px_0_#47857f] px-[5px] pt-[3px]"><div class="relative h-[8px] bg-[#36605b] shadow-[inset_0_1px_0_#25423f]"><i class="absolute left-[calc(51%-3px)] top-[-2px] w-[6px] h-[11px] bg-[#d9686c] shadow-[inset_1px_0_0_#f0a0a0,inset_-1px_0_0_#a84448]"></i></div><div class="flex justify-between px-[2px] pt-[1px] leading-[12px] whitespace-nowrap"><span>density...</span><span>0.51</span></div></div></div>
 <div class="w-[68px] mt-[1px]"><div class="h-[44px] bg-[#72bdb5] shadow-[inset_1px_1px_0_#d6e4e2,inset_-1px_-1px_0_#47857f] px-[4px] pt-[3px]"><div class="leading-[11px] h-[15px] whitespace-nowrap overflow-hidden text-[7.2px]">#private-leisure</div><div class="h-[21px] bg-white border-[1.5px] border-[#b4b8b8] px-[1px] text-[#b5442a] font-['DejaVu_Sans_Mono',monospace] text-[9px] leading-[12px]">10</div></div><div class="h-[24px] bg-[#72bdb5] shadow-[inset_1px_1px_0_#d6e4e2,inset_-1px_-1px_0_#47857f] px-[5px] pt-[3px]"><div class="relative h-[8px] bg-[#36605b] shadow-[inset_0_1px_0_#25423f]"><i class="absolute left-[calc(21%-3px)] top-[-2px] w-[6px] h-[11px] bg-[#d9686c] shadow-[inset_1px_0_0_#f0a0a0,inset_-1px_0_0_#a84448]"></i></div><div class="flex justify-between px-[2px] pt-[1px] leading-[12px] whitespace-nowrap"><span>density...</span><span>0.21</span></div></div></div>
 <div class="w-[67px] mt-[1px]"><div class="h-[44px] bg-[#72bdb5] shadow-[inset_1px_1px_0_#d6e4e2,inset_-1px_-1px_0_#47857f] px-[4px] pt-[3px]"><div class="leading-[11px] h-[15px] whitespace-nowrap overflow-hidden text-[7.2px]">#homes</div><div class="h-[21px] bg-white border-[1.5px] border-[#b4b8b8] px-[1px] text-[#b5442a] font-['DejaVu_Sans_Mono',monospace] text-[9px] leading-[12px]">100</div></div><div class="h-[24px] bg-[#72bdb5] shadow-[inset_1px_1px_0_#d6e4e2,inset_-1px_-1px_0_#47857f] px-[5px] pt-[3px]"><div class="relative h-[8px] bg-[#36605b] shadow-[inset_0_1px_0_#25423f]"><i class="absolute left-[calc(100%-4px)] top-[-2px] w-[6px] h-[11px] bg-[#d9686c] shadow-[inset_1px_0_0_#f0a0a0,inset_-1px_0_0_#a84448]"></i></div><div class="flex justify-between px-[2px] pt-[1px] leading-[12px] whitespace-nowrap"><span>density...</span><span>1.00</span></div></div></div>
 <div class="w-[69px] mt-[1px]"><div class="h-[44px] bg-[#72bdb5] shadow-[inset_1px_1px_0_#d6e4e2,inset_-1px_-1px_0_#47857f] px-[4px] pt-[3px]"><div class="leading-[11px] h-[15px] whitespace-nowrap overflow-hidden text-[7.2px]">#essential-shops</div><div class="h-[21px] bg-white border-[1.5px] border-[#b4b8b8] px-[1px] text-[#b5442a] font-['DejaVu_Sans_Mono',monospace] text-[9px] leading-[12px]">5</div></div><div class="h-[24px] bg-[#72bdb5] shadow-[inset_1px_1px_0_#d6e4e2,inset_-1px_-1px_0_#47857f] px-[5px] pt-[3px]"><div class="relative h-[8px] bg-[#36605b] shadow-[inset_0_1px_0_#25423f]"><i class="absolute left-[calc(19%-3px)] top-[-2px] w-[6px] h-[11px] bg-[#d9686c] shadow-[inset_1px_0_0_#f0a0a0,inset_-1px_0_0_#a84448]"></i></div><div class="flex justify-between px-[2px] pt-[1px] leading-[12px] whitespace-nowrap"><span>density...</span><span>0.19</span></div></div></div>
 <div class="w-[66px] mt-[1px]"><div class="h-[43px] bg-[#72bdb5] shadow-[inset_1px_1px_0_#d6e4e2,inset_-1px_-1px_0_#47857f] px-[4px] pt-[3px]"><div class="leading-[11px] h-[15px] whitespace-nowrap overflow-hidden text-[7.2px]">#non-essentia...</div><div class="h-[21px] bg-white border-[1.5px] border-[#b4b8b8] px-[1px] text-[#b5442a] font-['DejaVu_Sans_Mono',monospace] text-[9px] leading-[12px]">10</div></div><div class="h-[24px] bg-[#72bdb5] shadow-[inset_1px_1px_0_#d6e4e2,inset_-1px_-1px_0_#47857f] px-[5px] pt-[3px]"><div class="relative h-[8px] bg-[#36605b] shadow-[inset_0_1px_0_#25423f]"><i class="absolute left-[calc(71%-3px)] top-[-2px] w-[6px] h-[11px] bg-[#d9686c] shadow-[inset_1px_0_0_#f0a0a0,inset_-1px_0_0_#a84448]"></i></div><div class="flex justify-between px-[2px] pt-[1px] leading-[12px] whitespace-nowrap"><span>density...</span><span>0.71</span></div></div></div>
</div>

<!-- measures -->
<div class="absolute left-[463px] top-[517px] text-[9.3px] leading-[12px] text-[#1d6f8a]">Measures:</div>
<div class="absolute left-[542px] top-[528px] text-[7.8px] leading-[11px] whitespace-nowrap">People testing</div>
<div class="absolute left-[473px] top-[570px] w-[92px] h-[21px] overflow-hidden text-[6.6px] leading-[9px]">All people at home are<br>tested if one is confirmed<br>sick</div>
<div class="absolute left-[473px] top-[593px] w-[92px] h-[20px] overflow-hidden text-[6.6px] leading-[9px]">All people at work are<br>tested if one is confirmed<br>sick</div>
<div class="absolute left-[566px] top-[542px] w-[170px] flex flex-col">
 <div class="h-[24px] bg-[#72bdb5] shadow-[inset_1px_1px_0_#d6e4e2,inset_-1px_-1px_0_#47857f] px-[5px] pt-[3px]"><div class="relative h-[8px] bg-[#36605b] shadow-[inset_0_1px_0_#25423f]"><i class="absolute left-[-3px] top-[-2px] w-[6px] h-[11px] bg-[#d9686c] shadow-[inset_1px_0_0_#f0a0a0,inset_-1px_0_0_#a84448]"></i></div><div class="flex justify-between pl-[2px] pr-[1px] pt-[1px] leading-[12px] whitespace-nowrap"><span>ratio-population-randomly-test...</span><span>0.00</span></div></div>
 <div class="relative h-[24px] bg-[#72bdb5] shadow-[inset_1px_1px_0_#d6e4e2,inset_-1px_-1px_0_#47857f]"><i class="absolute left-[5px] top-[3px] w-[6px] h-[17px] bg-[#36605b]"></i><i class="absolute left-[3px] top-[3px] w-[9px] h-[6px] bg-[#d9686c]"></i><span class="absolute left-[13px] top-[3px] text-[9px] leading-[9px]">On<br>Off</span><span class="absolute left-[33px] top-[4px] whitespace-nowrap">test-home-of-confirmed-people?</span></div>
 <div class="relative h-[24px] bg-[#72bdb5] shadow-[inset_1px_1px_0_#d6e4e2,inset_-1px_-1px_0_#47857f]"><i class="absolute left-[5px] top-[3px] w-[6px] h-[17px] bg-[#36605b]"></i><i class="absolute left-[3px] top-[3px] w-[9px] h-[6px] bg-[#d9686c]"></i><span class="absolute left-[13px] top-[3px] text-[9px] leading-[9px]">On<br>Off</span><span class="absolute left-[33px] top-[4px] whitespace-nowrap">test-workplace-of-confirmed-p...</span></div>
</div>

<!-- dead monitors -->
<div class="absolute left-[15px] top-[579px] flex gap-[3px]">
 <div class="w-[67px] h-[34px] bg-[#e2e0b1] shadow-[inset_1px_1px_0_#d2d2c8,inset_-1px_-1px_0_#9c9c84] px-[4px] pt-[4px]"><div class="leading-[10px] whitespace-nowrap">#dead-people</div><div class="h-[15px] bg-white px-[4px] leading-[15px]">0</div></div>
 <div class="w-[68px] h-[34px] bg-[#e2e0b1] shadow-[inset_1px_1px_0_#d2d2c8,inset_-1px_-1px_0_#9c9c84] px-[4px] pt-[4px]"><div class="leading-[10px] whitespace-nowrap">#dead-retired</div><div class="h-[15px] bg-white px-[4px] leading-[15px]">0</div></div>
</div>

<!-- clipped monitors at the bottom -->
<div class="absolute left-[17px] top-[624px] flex h-[12px]">
 <div class="w-[44px] bg-[#e2e0b1] shadow-[inset_1px_1px_0_#d2d2c8,inset_-1px_0_0_#9c9c84] px-[4px] pt-[5px] leading-[10px] whitespace-nowrap overflow-hidden">#Class</div>
 <div class="w-[48px] bg-[#e2e0b1] shadow-[inset_1px_1px_0_#d2d2c8,inset_-1px_0_0_#9c9c84] px-[4px] pt-[5px] leading-[10px] whitespace-nowrap overflow-hidden">#School</div>
 <div class="w-[63px] bg-[#e2e0b1] shadow-[inset_1px_1px_0_#d2d2c8,inset_-1px_0_0_#9c9c84] px-[4px] pt-[5px] leading-[10px] whitespace-nowrap overflow-hidden">#Cookd...</div>
 <div class="w-[61px] bg-[#e2e0b1] shadow-[inset_1px_1px_0_#d2d2c8,inset_-1px_0_0_#9c9c84] px-[4px] pt-[5px] leading-[10px] whitespace-nowrap overflow-hidden">#University</div>
 <div class="w-[54px] bg-[#e2e0b1] shadow-[inset_1px_1px_0_#d2d2c8,inset_-1px_0_0_#9c9c84] px-[4px] pt-[5px] leading-[10px] whitespace-nowrap overflow-hidden">#Hospital</div>
 <div class="w-[50px] bg-[#e2e0b1] shadow-[inset_1px_1px_0_#d2d2c8,inset_-1px_0_0_#9c9c84] px-[4px] pt-[5px] leading-[10px] whitespace-nowrap overflow-hidden">#Shops</div>
 <div class="w-[75px] bg-[#e2e0b1] shadow-[inset_1px_1px_0_#d2d2c8,inset_-1px_0_0_#9c9c84] px-[4px] pt-[5px] leading-[10px] whitespace-nowrap overflow-hidden">#Essential-sh</div>
 <div class="w-[43px] bg-[#e2e0b1] shadow-[inset_1px_1px_0_#d2d2c8,inset_-1px_0_0_#9c9c84] px-[4px] pt-[5px] leading-[10px] whitespace-nowrap overflow-hidden">#Other</div>
</div>

<!-- bottom strip -->
<div class="absolute left-0 bottom-0 w-full h-[3px] bg-[#eeeeee] border-t border-[#d8d8d8]"></div>
</div>
</body></html>
